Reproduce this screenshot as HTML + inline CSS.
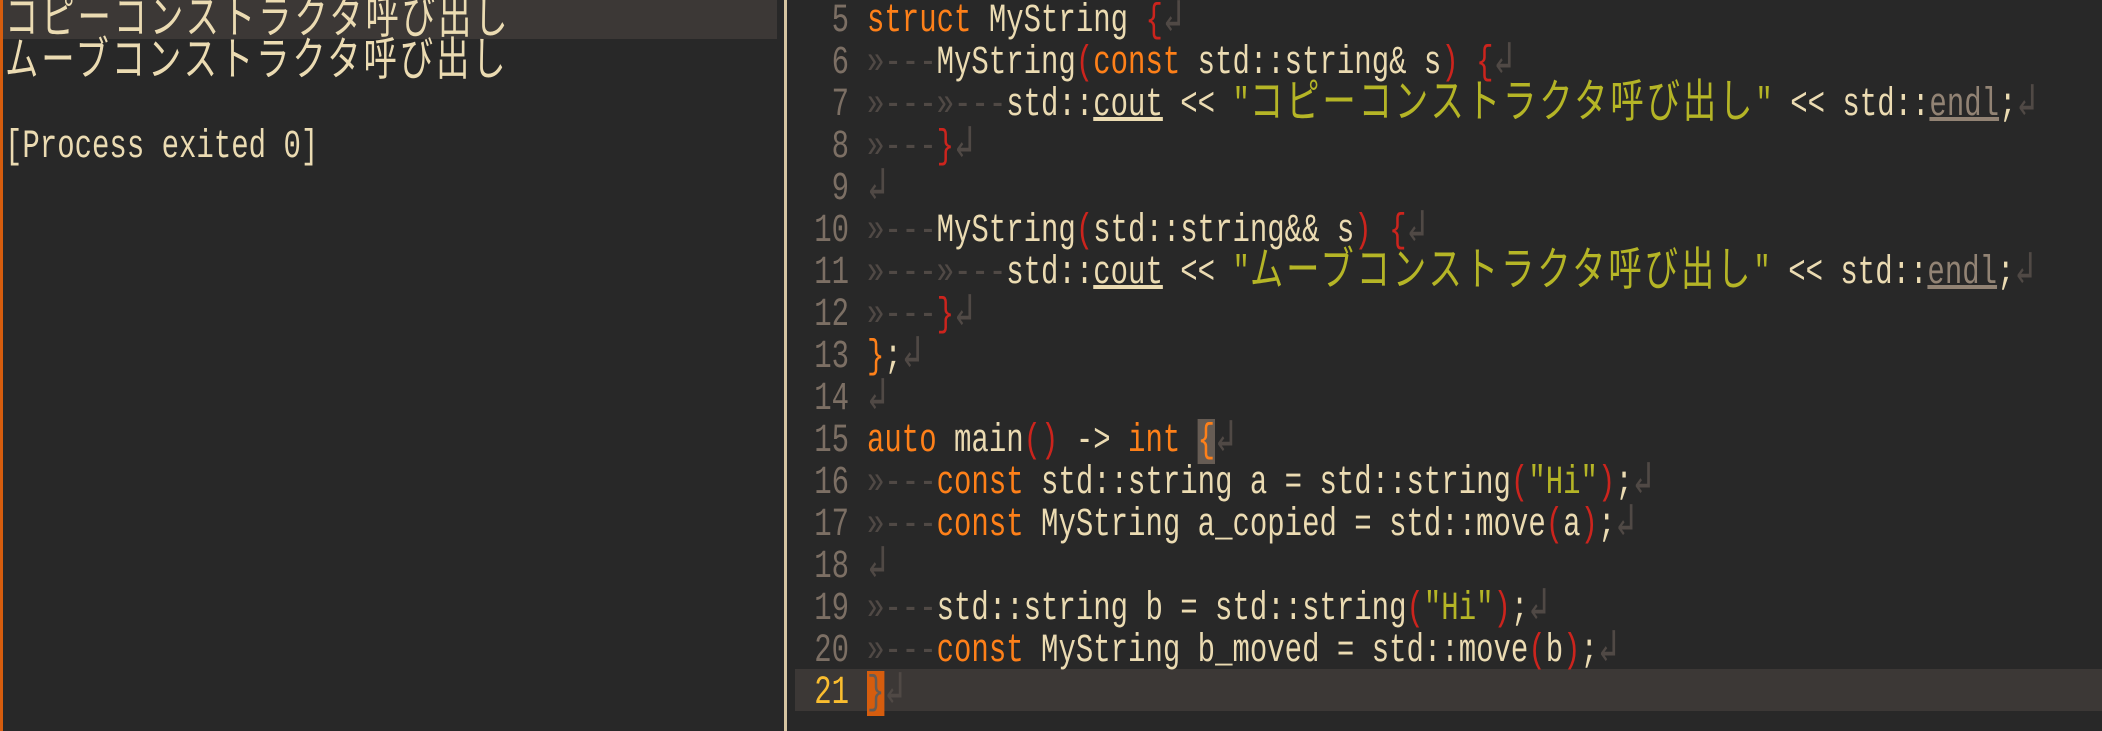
<!DOCTYPE html>
<html><head><meta charset="utf-8"><style>
html,body{margin:0;padding:0;background:#282828;width:2102px;height:731px;overflow:hidden}
.l{position:absolute;height:42px;line-height:50px;white-space:pre;font-family:"Liberation Mono","Noto Sans CJK JP",monospace;font-size:40px;color:#ebdbb2;transform:scaleX(0.725);transform-origin:0 0}
.j{letter-spacing:4px;font-size:46px;line-height:40px;position:relative;top:2px}
.k{color:#fe8019}.r{color:#cc241d}.s{color:#b5b526}.t{color:#504945}.u{text-decoration:underline}.g{color:#928374;text-decoration:underline}
.a{font-size:46px;line-height:40px}
#left{position:absolute;left:0;top:0;width:784px;height:731px;border-left:3px solid #d65d0e;box-sizing:border-box}
#div{position:absolute;left:784px;top:0;width:3px;height:731px;background:#d5c4a1}
.hl{position:absolute;background:#3c3836}
.num{position:absolute;width:60px;text-align:right;height:42px;line-height:50px;font-family:"Liberation Mono",monospace;font-size:40px;color:#7c6f64;transform:scaleX(0.725);transform-origin:100% 0}
</style></head><body>
<div id="left"></div>
<div class="hl" style="left:3px;top:0;width:774px;height:39px"></div>
<div class="l" style="left:5px;top:-3px"><span class="j">コピーコンストラクタ呼び出し</span></div>
<div class="l" style="left:5px;top:39px"><span class="j">ムーブコンストラクタ呼び出し</span></div>
<div class="l" style="left:5px;top:123px">[Process exited 0]</div>
<div id="div"></div>
<div class="hl" style="left:795px;top:669px;width:1307px;height:42px"></div>

<div class="num" style="left:789px;top:-3px">5</div>
<div class="num" style="left:789px;top:39px">6</div>
<div class="num" style="left:789px;top:81px">7</div>
<div class="num" style="left:789px;top:123px">8</div>
<div class="num" style="left:789px;top:165px">9</div>
<div class="num" style="left:789px;top:207px">10</div>
<div class="num" style="left:789px;top:249px">11</div>
<div class="num" style="left:789px;top:291px">12</div>
<div class="num" style="left:789px;top:333px">13</div>
<div class="num" style="left:789px;top:375px">14</div>
<div class="num" style="left:789px;top:417px">15</div>
<div class="num" style="left:789px;top:459px">16</div>
<div class="num" style="left:789px;top:501px">17</div>
<div class="num" style="left:789px;top:543px">18</div>
<div class="num" style="left:789px;top:585px">19</div>
<div class="num" style="left:789px;top:627px">20</div>
<div class="num" style="left:789px;top:669px;color:#fabd2f">21</div>

<div class="l" style="left:867px;top:-3px"><span class="k">struct</span> MyString <span class="r">{</span><span class="t a">↲</span></div>
<div class="l" style="left:867px;top:39px"><span class="t">»---</span>MyString<span class="r">(</span><span class="k">const</span> std::string&amp; s<span class="r">)</span> <span class="r">{</span><span class="t a">↲</span></div>
<div class="l" style="left:867px;top:81px"><span class="t">»---»---</span>std::<span class="u">cout</span> &lt;&lt; <span class="s">"<span class="j">コピーコンストラクタ呼び出し</span>"</span> &lt;&lt; std::<span class="g">endl</span>;<span class="t a">↲</span></div>
<div class="l" style="left:867px;top:123px"><span class="t">»---</span><span class="r">}</span><span class="t a">↲</span></div>
<div class="l" style="left:867px;top:165px"><span class="t a">↲</span></div>
<div class="l" style="left:867px;top:207px"><span class="t">»---</span>MyString<span class="r">(</span>std::string&amp;&amp; s<span class="r">)</span> <span class="r">{</span><span class="t a">↲</span></div>
<div class="l" style="left:867px;top:249px"><span class="t">»---»---</span>std::<span class="u">cout</span> &lt;&lt; <span class="s">"<span class="j">ムーブコンストラクタ呼び出し</span>"</span> &lt;&lt; std::<span class="g">endl</span>;<span class="t a">↲</span></div>
<div class="l" style="left:867px;top:291px"><span class="t">»---</span><span class="r">}</span><span class="t a">↲</span></div>
<div class="l" style="left:867px;top:333px"><span class="k">}</span>;<span class="t a">↲</span></div>
<div class="l" style="left:867px;top:375px"><span class="t a">↲</span></div>
<div class="l" style="left:867px;top:417px"><span class="k">auto</span> main<span class="r">()</span> -&gt; <span class="k">int</span> <span class="k" style="background:#665c54">{</span><span class="t a">↲</span></div>
<div class="l" style="left:867px;top:459px"><span class="t">»---</span><span class="k">const</span> std::string a = std::string<span class="r">(</span><span class="s">"Hi"</span><span class="r">)</span>;<span class="t a">↲</span></div>
<div class="l" style="left:867px;top:501px"><span class="t">»---</span><span class="k">const</span> MyString a_copied = std::move<span class="r">(</span>a<span class="r">)</span>;<span class="t a">↲</span></div>
<div class="l" style="left:867px;top:543px"><span class="t a">↲</span></div>
<div class="l" style="left:867px;top:585px"><span class="t">»---</span>std::string b = std::string<span class="r">(</span><span class="s">"Hi"</span><span class="r">)</span>;<span class="t a">↲</span></div>
<div class="l" style="left:867px;top:627px"><span class="t">»---</span><span class="k">const</span> MyString b_moved = std::move<span class="r">(</span>b<span class="r">)</span>;<span class="t a">↲</span></div>
<div class="l" style="left:867px;top:669px"><span style="background:#d65d0e;color:#665c54">}</span><span class="t a">↲</span></div>
</body></html>
